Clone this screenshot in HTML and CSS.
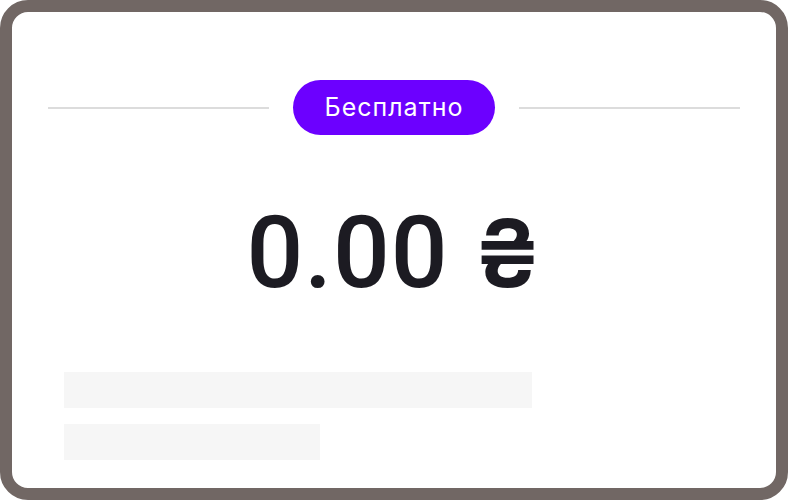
FILE: index.html
```html
<!DOCTYPE html>
<html lang="ru">
<head>
<meta charset="utf-8">
<link rel="stylesheet" href="styles.css">
</head>
<body>
<div class="card">
  <div class="header">
    <span class="line"></span>
    <span class="pill">Бесплатно</span>
    <span class="line"></span>
  </div>
  <div class="price">0.00 <span class="cur">₴</span></div>
  <div class="skeleton">
    <div class="bar bar-long"></div>
    <div class="bar bar-short"></div>
  </div>
</div>
</body>
</html>
```
FILE: styles.css
```css
html, body {
  margin: 0;
  padding: 0;
  background: #ffffff;
}
body {
  width: 788px;
  height: 500px;
  font-family: Inter, "Noto Sans", sans-serif;
}
.card {
  box-sizing: border-box;
  width: 788px;
  height: 500px;
  border: 12px solid #716764;
  border-radius: 28px;
  background: #ffffff;
  display: flex;
  flex-direction: column;
}
.header {
  display: flex;
  align-items: center;
  gap: 24px;
  padding: 68px 36px 0 36px;
}
.line {
  flex: 1;
  height: 2px;
  background: #dcdcdc;
}
.pill {
  height: 55px;
  padding: 0 32px 0 32px;
  border-radius: 28px;
  background: #6c00ff;
  color: #ffffff;
  font-family: Inter, sans-serif;
  font-size: 25px;
  letter-spacing: 1px;
  line-height: 55px;
  font-weight: 400;
}
.price {
  margin-top: 68px;
  height: 100px;
  text-align: center;
  font-family: Roboto, "Liberation Sans", sans-serif;
  font-weight: 500;
  font-size: 100px;
  line-height: 100px;
  color: #1c1b22;
  letter-spacing: 1px;
}
.cur {
  font-family: Inter, sans-serif;
  font-weight: 600;
  font-size: 94px;
}
.skeleton {
  display: flex;
  flex-direction: column;
  gap: 16px;
  padding: 0 52px;
  margin-top: 69px;
}
.bar {
  height: 36px;
  background: #f6f6f6;
}
.bar-long { width: 468px; }
.bar-short { width: 256px; }
```
